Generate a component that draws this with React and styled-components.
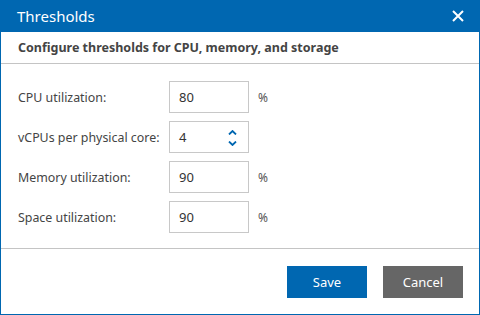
import React from 'react';
import styled, {createGlobalStyle} from 'styled-components';

const GlobalStyle = createGlobalStyle`
  html, body {
    margin: 0;
    padding: 0;
    background: #fff;
  }
  body {
    font-family: "Noto Sans", "Open Sans", sans-serif;
  }
`;

const BLUE = '#0067b1';

const Dialog = styled.div`
  width: 480px;
  height: 315px;
  box-sizing: border-box;
  border: 1px solid ${BLUE};
  border-top: none;
  display: flex;
  flex-direction: column;
  background: #fff;
`;

const TitleBar = styled.div`
  height: 32px;
  margin: 0 -1px;
  background: ${BLUE};
  color: #fff;
  display: flex;
  align-items: center;
  justify-content: space-between;
  padding: 0 15px 0 17px;
  font-size: 15px;
`;

const CloseButton = styled.button`
  border: none;
  background: none;
  padding: 0;
  width: 14px;
  height: 14px;
  display: flex;
  cursor: pointer;
`;

const SubHeader = styled.div`
  height: 31px;
  border-bottom: 1px solid #c4c4c4;
  display: flex;
  align-items: center;
  padding: 0 17px;
  font-size: 12.5px;
  font-weight: 700;
  color: #444;
`;

const Form = styled.div`
  flex: 1;
  display: flex;
  flex-direction: column;
  gap: 8px;
  padding: 17px 17px 0;
`;

const Row = styled.div`
  display: grid;
  grid-template-columns: 142px 80px auto;
  align-items: center;
  column-gap: 9px;
  height: 32px;
`;

const Label = styled.label`
  font-size: 12.4px;
  color: #444;
  white-space: nowrap;
`;

const InputBox = styled.div`
  height: 32px;
  box-sizing: border-box;
  border: 1px solid #c8c8c8;
  display: flex;
  align-items: center;
  justify-content: space-between;
  padding: 0 11px 0 9px;
  font-size: 13px;
  color: #333;
`;

const Unit = styled.span`
  font-size: 12px;
  color: #555;
`;

const Spinner = styled.div`
  display: flex;
  flex-direction: column;
  gap: 6px;
  margin-top: 1px;
`;

const Footer = styled.div`
  height: 65px;
  border-top: 1px solid #c4c4c4;
  display: flex;
  justify-content: flex-end;
  align-items: center;
  gap: 16px;
  padding: 0 16px 0 0;
`;

const Button = styled.button`
  width: 80px;
  height: 32px;
  border: none;
  background: ${p => (p.$primary ? BLUE : '#666')};
  color: #fff;
  font-family: "Noto Sans", "Open Sans", sans-serif;
  font-size: 13px;
  cursor: pointer;
`;

const Chevron = ({up}) => (
  <svg width="9" height="5" viewBox="0 0 9 5">
    <path
      d={up ? 'M1 4.5 L4.5 1 L8 4.5' : 'M1 0.5 L4.5 4 L8 0.5'}
      fill="none"
      stroke={BLUE}
      strokeWidth="1.8"
    />
  </svg>
);

const rows = [
  {label: 'CPU utilization:', value: '80', unit: '%'},
  {label: 'vCPUs per physical core:', value: '4', spin: true},
  {label: 'Memory utilization:', value: '90', unit: '%'},
  {label: 'Space utilization:', value: '90', unit: '%'},
];

export default function App() {
  return (
    <>
      <GlobalStyle/>
      <Dialog>
        <TitleBar>
          <span>Thresholds</span>
          <CloseButton>
            <svg width="14" height="14" viewBox="0 0 14 14">
              <path d="M2 2 L12 12 M12 2 L2 12" stroke="#fff" strokeWidth="2"/>
            </svg>
          </CloseButton>
        </TitleBar>
        <SubHeader>Configure thresholds for CPU, memory, and storage</SubHeader>
        <Form>
          {rows.map(r => (
            <Row key={r.label}>
              <Label>{r.label}</Label>
              <InputBox>
                <span>{r.value}</span>
                {r.spin && (
                  <Spinner>
                    <Chevron up/>
                    <Chevron/>
                  </Spinner>
                )}
              </InputBox>
              {r.unit && <Unit>{r.unit}</Unit>}
            </Row>
          ))}
        </Form>
        <Footer>
          <Button $primary>Save</Button>
          <Button>Cancel</Button>
        </Footer>
      </Dialog>
    </>
  );
}
